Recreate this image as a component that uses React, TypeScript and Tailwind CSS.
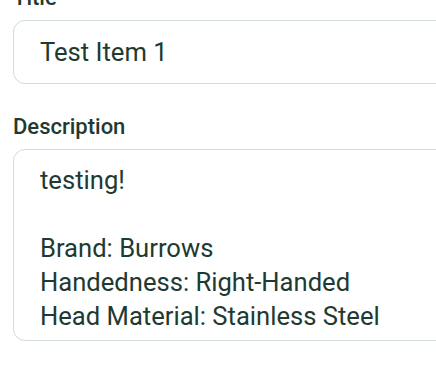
import React from "react";

const description = `testing!

Brand: Burrows
Handedness: Right-Handed
Head Material: Stainless Steel`;

export default function App() {
  return (
    <div className="w-[436px] h-[370px] overflow-hidden bg-white font-['Roboto',sans-serif] text-[#1e3a31]">
      <div className="pl-[13px] -mt-[16px] w-[700px]">
        <label className="block text-[22px] leading-[28px] font-medium mb-2">Title</label>
        <input
          readOnly
          value="Test Item 1"
          className="block w-full h-[64px] rounded-[12px] border border-[#d0dcd8] px-[26px] text-[25.6px] text-[#1e3a31] outline-none bg-white"
        />
        <label className="block text-[22px] leading-[28px] font-medium mt-[29px] mb-2">Description</label>
        <textarea
          readOnly
          value={description}
          className="block w-full h-[192px] rounded-[12px] border border-[#d0dcd8] px-[26px] pt-[13px] text-[25.6px] leading-[34px] text-[#1e3a31] outline-none resize-none overflow-hidden bg-white"
        />
      </div>
    </div>
  );
}
